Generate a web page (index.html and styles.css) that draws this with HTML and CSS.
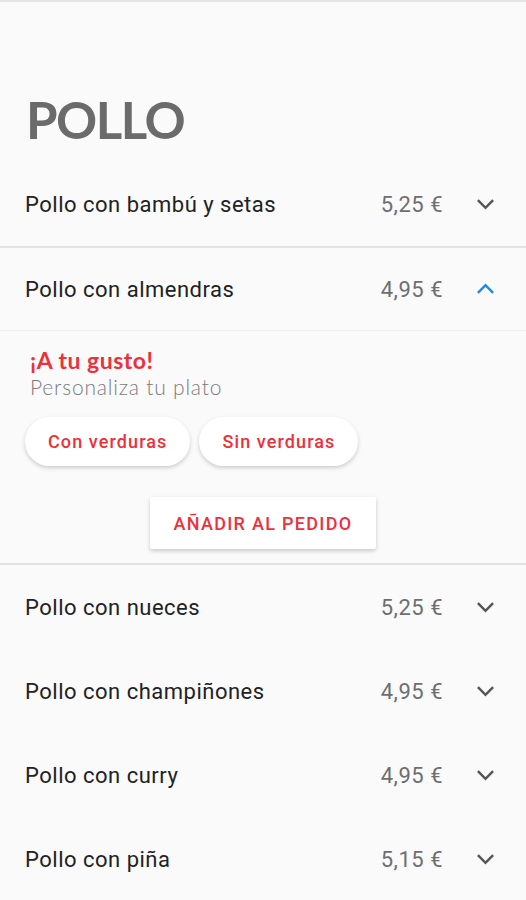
FILE: index.html
```html
<!DOCTYPE html>
<html lang="es">
<head>
  <meta charset="UTF-8">
  <meta name="viewport" content="width=device-width, initial-scale=1.0">
  <title>Pollo</title>
  <link rel="stylesheet" href="styles.css">
</head>
<body>

  <div class="top-line"></div>

  <h1 class="category">POLLO</h1>

  <div class="menu-list">
    <div class="dish">
      <span class="dish-name">Pollo con bambú y setas</span>
      <span class="dish-price">5,25 €</span>
      <svg class="chevron" viewBox="0 0 20 12"><polyline points="2,2 10,10 18,2"/></svg>
    </div>

    <!-- Expanded dish -->
    <div class="dish-open">
      <div class="dish open-head">
        <span class="dish-name">Pollo con almendras</span>
        <span class="dish-price">4,95 €</span>
        <svg class="chevron up" viewBox="0 0 20 12"><polyline points="2,10 10,2 18,10"/></svg>
      </div>
      <div class="dish-body">
        <div class="custom-title">¡A tu gusto!</div>
        <div class="custom-sub">Personaliza tu plato</div>
        <div class="chips">
          <button class="chip">Con verduras</button>
          <button class="chip">Sin verduras</button>
        </div>
        <div class="add-row">
          <button class="add-btn">AÑADIR AL PEDIDO</button>
        </div>
      </div>
    </div>

    <div class="dish">
      <span class="dish-name">Pollo con nueces</span>
      <span class="dish-price">5,25 €</span>
      <svg class="chevron" viewBox="0 0 20 12"><polyline points="2,2 10,10 18,2"/></svg>
    </div>
    <div class="dish">
      <span class="dish-name">Pollo con champiñones</span>
      <span class="dish-price">4,95 €</span>
      <svg class="chevron" viewBox="0 0 20 12"><polyline points="2,2 10,10 18,2"/></svg>
    </div>
    <div class="dish">
      <span class="dish-name">Pollo con curry</span>
      <span class="dish-price">4,95 €</span>
      <svg class="chevron" viewBox="0 0 20 12"><polyline points="2,2 10,10 18,2"/></svg>
    </div>
    <div class="dish">
      <span class="dish-name">Pollo con piña</span>
      <span class="dish-price">5,15 €</span>
      <svg class="chevron" viewBox="0 0 20 12"><polyline points="2,2 10,10 18,2"/></svg>
    </div>
  </div>

</body>
</html>
```

FILE: styles.css
```css
body {
  margin: 0;
  background: #fafafa;
  font-family: Roboto, "Liberation Sans", sans-serif;
  color: #212121;
  overflow: hidden;
}
.top-line {
  height: 2px;
  background: #e4e4e4;
}
.category {
  margin: 0;
  padding: 86px 0 0 26px;
  height: 74px;
  font-family: Lato, "DejaVu Sans", sans-serif;
  font-size: 51px;
  font-weight: bold;
  line-height: 64px;
  color: #6b6b6b;
  letter-spacing: -1.5px;
}
.dish {
  display: flex;
  align-items: center;
  height: 84px;
  padding: 0 31px 0 25px;
}
.dish-name {
  flex: 1;
  font-size: 22px;
  letter-spacing: 0.5px;
  color: #222;
}
.dish-price {
  font-size: 22px;
  letter-spacing: 0.5px;
  color: #6e6e6e;
  margin-right: 33px;
}
.chevron {
  width: 19px;
  height: 12px;
  fill: none;
  stroke: #555;
  stroke-width: 2.6;
}
.chevron.up {
  stroke: #1e88e5;
}
.dish-open {
  border-top: 2px solid #e2e2e2;
  border-bottom: 2px solid #e2e2e2;
}
.open-head {
  height: 82px;
  border-bottom: 1px solid #f0f0f0;
}
.dish-body {
  padding: 16px 0 0 0;
  height: 216px;
}
.custom-title {
  padding-left: 30px;
  font-family: Lato, "DejaVu Sans", sans-serif;
  font-size: 23px;
  font-weight: bold;
  letter-spacing: 0.5px;
  color: #ef2f3a;
  line-height: 26px;
}
.custom-sub {
  padding-left: 30px;
  font-family: Lato, "DejaVu Sans", sans-serif;
  font-size: 21px;
  font-weight: 300;
  letter-spacing: 0.8px;
  color: #7a7a7a;
  line-height: 28px;
}
.chips {
  display: flex;
  gap: 9px;
  padding: 16px 0 0 25px;
}
.chip {
  font-family: Roboto, sans-serif;
  font-size: 18px;
  font-weight: 500;
  letter-spacing: 1.1px;
  color: #ef2f3a;
  background: #fff;
  border: none;
  height: 49px;
  padding: 0 23px;
  border-radius: 25px;
  box-shadow: 0 2px 4px rgba(0, 0, 0, 0.18);
}
.add-row {
  display: flex;
  justify-content: center;
  padding-top: 31px;
}
.add-btn {
  font-family: Roboto, sans-serif;
  font-size: 18px;
  font-weight: 500;
  color: #ef2f3a;
  background: #fff;
  border: none;
  height: 52px;
  width: 226px;
  border-radius: 2px;
  letter-spacing: 1.3px;
  box-shadow: 0 2px 4px rgba(0, 0, 0, 0.2);
}
```
